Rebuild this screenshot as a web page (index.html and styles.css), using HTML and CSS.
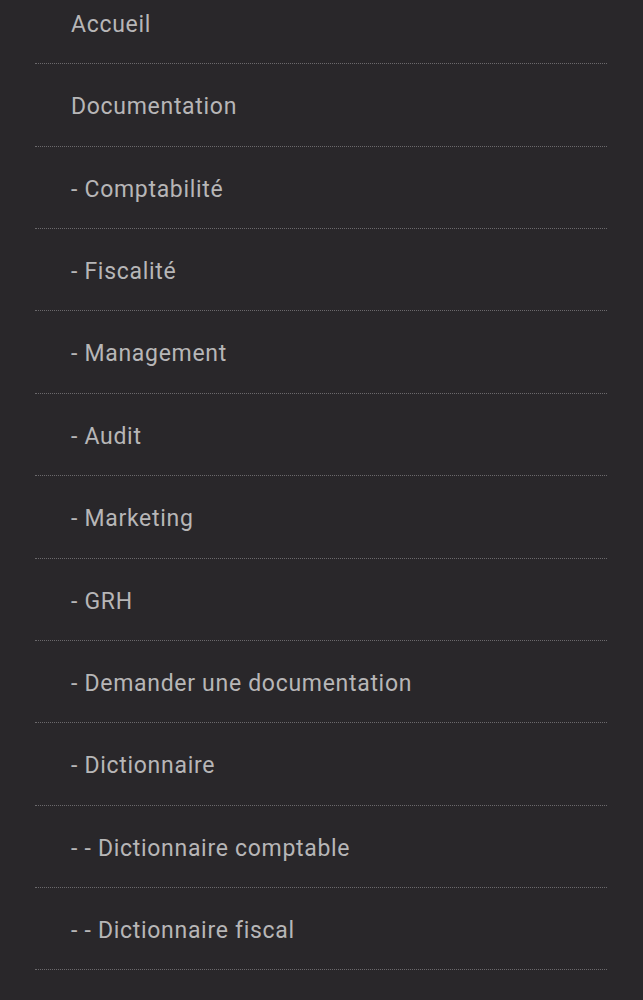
FILE: index.html
```html
<!DOCTYPE html>
<html lang="fr">
<head>
    <meta charset="UTF-8">
    <meta name="viewport" content="width=device-width, initial-scale=1.0">
    <title>Menu</title>
    <link rel="stylesheet" href="styles.css">
</head>
<body>
    <nav class="menu">
        <ul class="menu-liste">
            <li class="menu-item"><a href="#">Accueil</a></li>
            <li class="menu-item"><a href="#">Documentation</a></li>
            <li class="menu-item"><a href="#">- Comptabilité</a></li>
            <li class="menu-item"><a href="#">- Fiscalité</a></li>
            <li class="menu-item"><a href="#">- Management</a></li>
            <li class="menu-item"><a href="#">- Audit</a></li>
            <li class="menu-item"><a href="#">- Marketing</a></li>
            <li class="menu-item"><a href="#">- GRH</a></li>
            <li class="menu-item"><a href="#">- Demander une documentation</a></li>
            <li class="menu-item"><a href="#">- Dictionnaire</a></li>
            <li class="menu-item"><a href="#">- - Dictionnaire comptable</a></li>
            <li class="menu-item"><a href="#">- - Dictionnaire fiscal</a></li>
        </ul>
    </nav>
</body>
</html>
```

FILE: styles.css
```css
html, body {
    margin: 0;
    background-color: #29272a;
}

body {
    font-family: Roboto, "Liberation Sans", sans-serif;
    color: #b7b6b7;
}

.menu {
    padding: 0 36px 0 35px;
    height: 1000px;
    overflow: hidden;
}

.menu-liste {
    list-style: none;
    margin: -18px 0 0 0;
    padding: 0;
}

.menu-item {
    border-bottom: 1px dotted #6b696c;
}

.menu-item a {
    display: block;
    padding: 28px 0 23.36px 36px;
    line-height: 30px;
    font-size: 23px;
    letter-spacing: 0.7px;
    color: inherit;
    text-decoration: none;
}
```
